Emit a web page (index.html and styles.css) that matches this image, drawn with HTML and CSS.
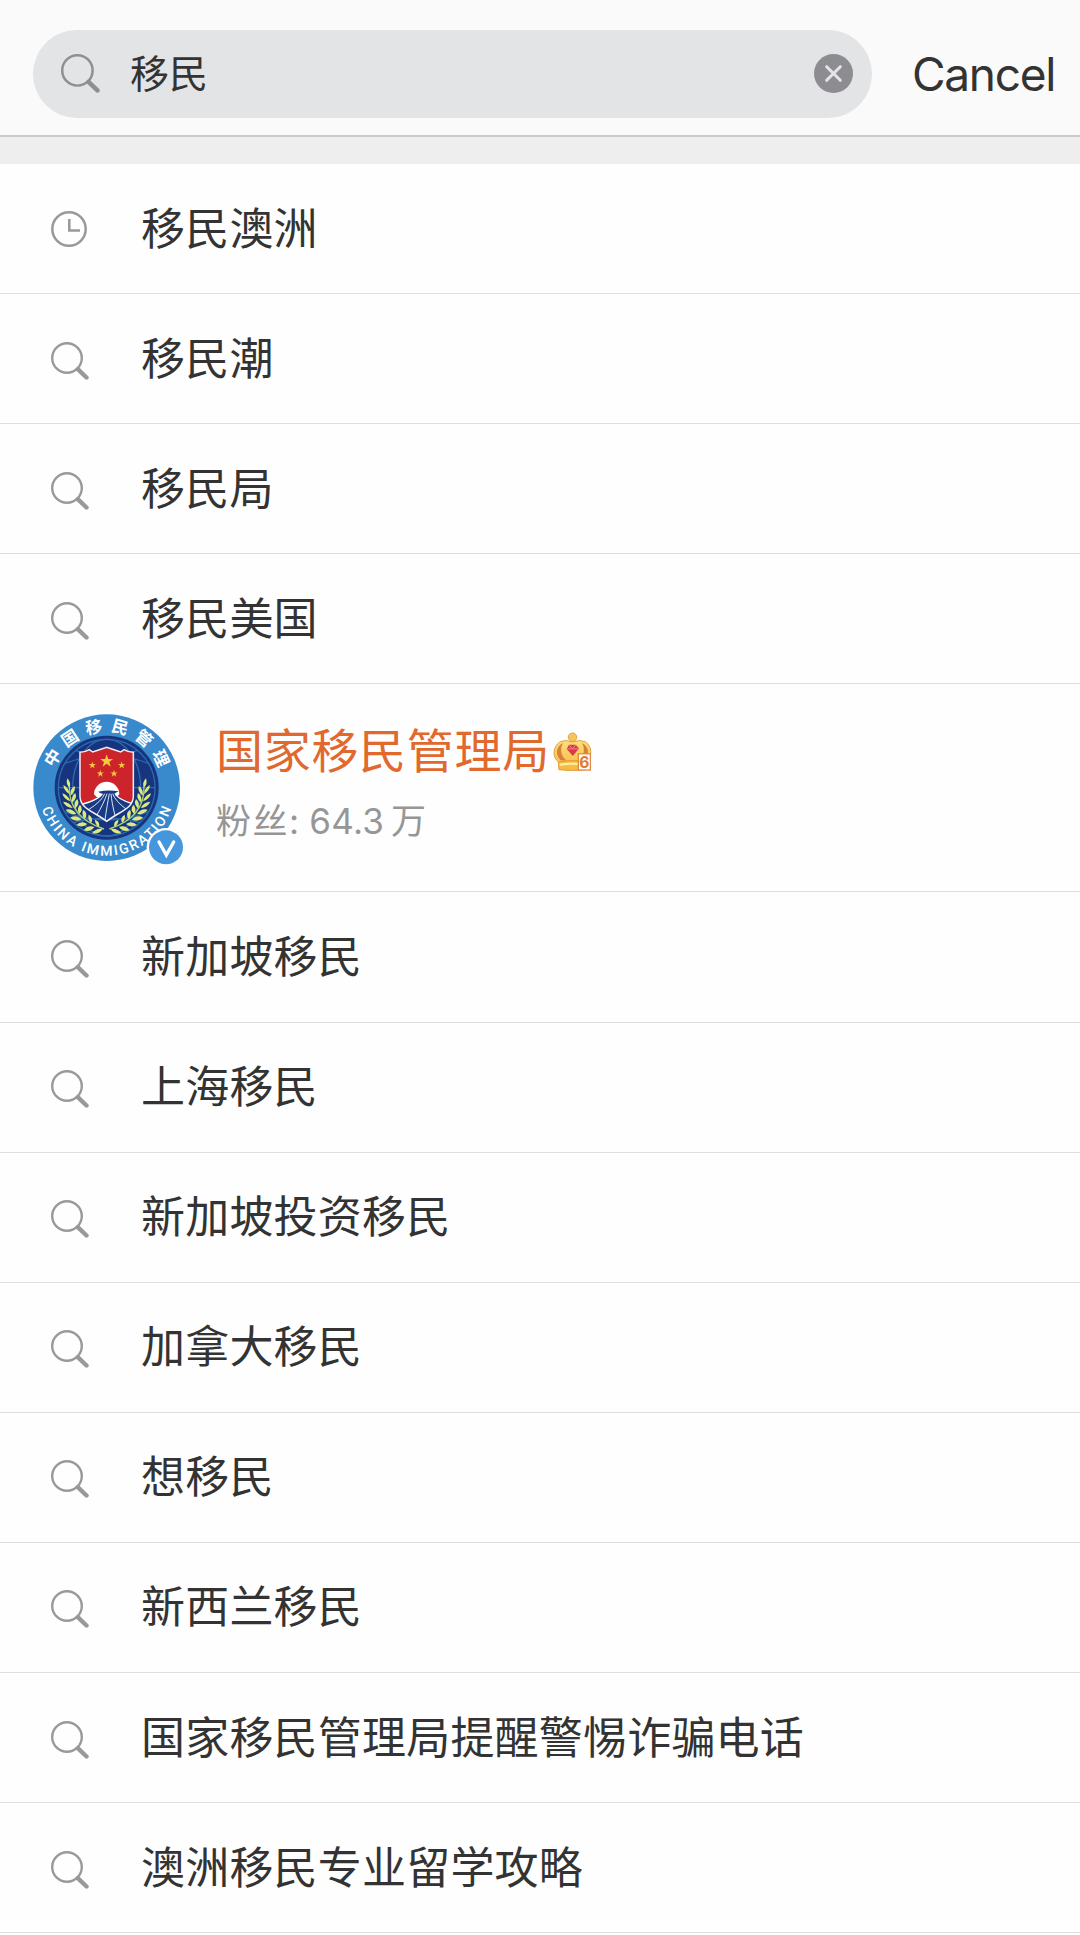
FILE: index.html
```html
<!DOCTYPE html>
<html lang="zh-CN">
<head>
  <meta charset="UTF-8">
  <meta name="viewport" content="width=device-width, initial-scale=1.0">
  <title>移民</title>
  <link rel="stylesheet" href="styles.css">
</head>
<body>

<!-- shared icon -->
<svg class="defs" width="0" height="0">
  <symbol id="search" viewBox="0 0 38 38">
    <circle cx="16" cy="16" r="14.8" fill="none" stroke="currentColor" stroke-width="2.4"/>
    <path d="M26.8 27.2L35.5 35.5" fill="none" stroke="currentColor" stroke-width="4.4" stroke-linecap="round"/>
  </symbol>
</svg>

<header class="header">
  <div class="search-box">
    <svg class="box-icon"><use href="#search"/></svg>
    <span class="query">移民</span>
    <svg class="clear" viewBox="0 0 39 39">
      <circle cx="19.5" cy="19.5" r="19.5" fill="#8d8c91"/>
      <path d="M12.7 12.7L26.3 26.3M26.3 12.7L12.7 26.3" stroke="#e5e5e8" stroke-width="3" stroke-linecap="round"/>
    </svg>
  </div>
  <span class="cancel">Cancel</span>
</header>

<ul class="list">
  <li class="row">
    <svg class="icon clock" viewBox="0 0 38 38">
      <circle cx="18" cy="19" r="16.7" fill="none" stroke="currentColor" stroke-width="2.5"/>
      <path d="M18.3 9V20.5H29" fill="none" stroke="currentColor" stroke-width="2.6"/>
    </svg>
    <span class="word">移民澳洲</span>
  </li>
  <li class="row"><svg class="icon"><use href="#search"/></svg><span class="word">移民潮</span></li>
  <li class="row"><svg class="icon"><use href="#search"/></svg><span class="word">移民局</span></li>
  <li class="row"><svg class="icon"><use href="#search"/></svg><span class="word">移民美国</span></li>

  <li class="row profile">
    <svg class="avatar" viewBox="39 41 453 453">
      <defs>
        <path id="arc-top" d="M93 262A167 167 0 0 1 427 262"/>
        <path id="arc-bottom" d="M56 262A204 204 0 0 0 464 262"/>
        <clipPath id="shield-clip"><path id="shield" d="M180 156Q194 156 208 148L218 155L236 149L260 141L284 149L302 155L312 148Q326 156 340 156V288C340 326 296 334 260 363C224 334 180 326 180 288Z"/></clipPath>
        <g id="laurel" fill="#dce97c">
          <path d="M148 258C146 318 178 362 252 386" fill="none" stroke="#a9cf70" stroke-width="4"/>
          <path d="M149 262Q136 252 142 234Q154 246 149 262Z"/>
          <path d="M148 281Q132 272 130 254Q148 264 148 281Z"/>
          <path d="M151 286Q150 265 164 257Q168 274 151 286Z"/>
          <path d="M151 303Q131 297 127 279Q146 286 151 303Z"/>
          <path d="M156 307Q153 288 166 278Q173 294 156 307Z"/>
          <path d="M158 323Q137 321 129 304Q149 305 158 323Z"/>
          <path d="M165 325Q160 306 172 296Q181 312 165 325Z"/>
          <path d="M169 341Q149 344 137 328Q157 323 169 341Z"/>
          <path d="M177 341Q169 324 180 313Q192 328 177 341Z"/>
          <path d="M184 358Q167 367 150 352Q170 341 184 358Z"/>
          <path d="M194 356Q183 342 190 328Q206 340 194 356Z"/>
          <path d="M202 371Q188 384 169 374Q184 359 202 371Z"/>
          <path d="M213 368Q202 356 206 343Q222 353 213 368Z"/>
          <path d="M223 380Q211 396 191 390Q204 373 223 380Z"/>
          <path d="M236 380Q224 370 225 358Q242 364 236 380Z"/>
          <path d="M248 386Q237 403 216 399Q229 382 248 386Z"/>
        </g>
      </defs>
      <circle cx="260" cy="262" r="220" fill="#398acd"/>
      <circle cx="260" cy="262" r="156" fill="#17357f"/>
      <g fill="none" stroke="#2b6bae" stroke-width="4">
        <circle cx="260" cy="262" r="145"/>
        <ellipse cx="260" cy="262" rx="102" ry="145"/>
        <path d="M115 262H405M133 190Q260 140 387 190M133 334Q260 384 387 334M167 150Q260 190 353 150M160 367Q260 340 360 367"/>
      </g>
      <use href="#laurel"/>
      <use href="#laurel" transform="translate(520 0) scale(-1 1)"/>
      <use href="#shield" fill="#cc242a"/>
      <g clip-path="url(#shield-clip)">
        <path d="M222 282A38 38 0 0 1 298 282L290 290H230Z" fill="#fff"/>
        <path d="M234 274Q264 268 296 273L285 279Q290 293 340 308V370H180V312Q238 298 246 281Z" fill="#193b86"/>
        <path d="M180 314Q238 298 247 280M285 279Q290 295 340 311" fill="none" stroke="#fff" stroke-width="4"/>
        <path d="M254 280Q246 302 206 328M261 280Q252 308 230 345M268 280Q262 310 254 365M273 280Q275 306 286 350M278 280Q286 302 318 326" fill="none" stroke="#fff" stroke-width="2.6"/>
      </g>
      <use href="#shield" fill="none" stroke="#f3ecf1" stroke-width="4.5"/>
      <g fill="#f6c83b">
        <path id="star" d="M260 162L264.500 176H279L268 185L272 199L260 190L248 199L252 185L241 176H255.500Z"/>
        <use href="#star" transform="translate(217 194) scale(.55) translate(-260 -181)"/>
        <use href="#star" transform="translate(305 194) scale(.55) translate(-260 -181)"/>
        <use href="#star" transform="translate(241 219) scale(.55) translate(-260 -181)"/>
        <use href="#star" transform="translate(282 219) scale(.55) translate(-260 -181)"/>
      </g>
      <text class="seal-cn"><textPath href="#arc-top" startOffset="58">中国移民管理</textPath></text>
      <text class="seal-en"><textPath href="#arc-bottom" startOffset="64" textLength="513">CHINA IMMIGRATION</textPath></text>
      <circle cx="438" cy="441" r="58" fill="#fff"/>
      <circle cx="438" cy="441" r="51" fill="#4596dc"/>
      <path d="M417 425L439 464L461 425" fill="none" stroke="#fff" stroke-width="10" stroke-linecap="round"/>
    </svg>
    <div class="info">
      <div class="name">
        <span>国家移民管理局</span>
        <svg class="crown" viewBox="0 0 120 120">
          <defs>
            <linearGradient id="gold" x1="0" y1="0" x2="0" y2="1">
              <stop offset="0" stop-color="#fce07a"/>
              <stop offset="1" stop-color="#f5b640"/>
            </linearGradient>
          </defs>
          <path d="M18 116L16 91C-2 79-2 46 22 30Q38 22 60 31Q82 22 100 30C122 46 120 75 104 91L102 116Q60 122 18 116Z" fill="url(#gold)" stroke="#e39d45" stroke-width="3"/>
          <path d="M23 87C5 67 11 42 31 34C18 54 28 80 42 88ZM97 87C115 67 109 42 89 34C102 54 92 80 78 88Z" fill="#d9803a"/>
          <path d="M17 93Q60 84 103 93" fill="none" stroke="#ea9f3f" stroke-width="4"/>
          <path d="M21 101Q60 94 99 101" fill="none" stroke="#fff0a0" stroke-width="6"/>
          <circle cx="60" cy="16" r="13" fill="#f8c657" stroke="#df9f50" stroke-width="3"/>
          <path d="M49 39H70L80 51L61 74L42 52Z" fill="#dc3a48"/>
          <path d="M49 40L60 52L70 40M43 52H78" fill="none" stroke="#f5828c" stroke-width="3"/>
          <rect x="78" y="67" width="37" height="50" fill="#fff" stroke="#e38b40" stroke-width="4"/>
          <text class="level" x="96.500" y="110">6</text>
        </svg>
      </div>
      <div class="fans">粉丝<span class="num">: 64.3</span>万</div>
    </div>
  </li>

  <li class="row"><svg class="icon"><use href="#search"/></svg><span class="word">新加坡移民</span></li>
  <li class="row"><svg class="icon"><use href="#search"/></svg><span class="word">上海移民</span></li>
  <li class="row"><svg class="icon"><use href="#search"/></svg><span class="word">新加坡投资移民</span></li>
  <li class="row"><svg class="icon"><use href="#search"/></svg><span class="word">加拿大移民</span></li>
  <li class="row"><svg class="icon"><use href="#search"/></svg><span class="word">想移民</span></li>
  <li class="row"><svg class="icon"><use href="#search"/></svg><span class="word">新西兰移民</span></li>
  <li class="row"><svg class="icon"><use href="#search"/></svg><span class="word">国家移民管理局提醒警惕诈骗电话</span></li>
  <li class="row"><svg class="icon"><use href="#search"/></svg><span class="word">澳洲移民专业留学攻略</span></li>
</ul>

</body>
</html>
```
FILE: styles.css
```css
* {
  box-sizing: border-box;
}
body {
  margin: 0;
  height: 1935px;
  overflow: hidden;
  background: #fefefe;
  color: #333;
  font-family: "Noto Sans CJK SC", sans-serif;
}
.defs {
  position: absolute;
}
.header {
  display: flex;
  align-items: center;
  height: 137px;
  padding: 12px 0 0 33px;
  background: #fafafa;
  border-bottom: 2px solid #cacaca;
}
.search-box {
  display: flex;
  align-items: center;
  width: 839px;
  height: 88px;
  padding: 0 19px 0 28px;
  border-radius: 44px;
  background: #e3e4e6;
}
.box-icon {
  width: 39px;
  height: 39px;
  color: #8e8f91;
}
.query {
  flex: 1;
  margin-left: 30px;
  padding-bottom: 5px;
  font-size: 39px;
  line-height: 60px;
}
.clear {
  width: 39px;
  height: 39px;
}
.cancel {
  margin-left: 40px;
  padding-top: 1px;
  font-family: Inter, sans-serif;
  font-size: 46px;
  letter-spacing: -1.3px;
  line-height: 60px;
}
.list {
  margin: 0;
  padding: 0;
  list-style: none;
  border-top: 27px solid #eee;
}
.row {
  display: flex;
  align-items: center;
  height: 130.1px;
  padding-left: 51px;
  border-bottom: 1px solid #dedede;
  font-size: 44px;
  letter-spacing: 0.2px;
  line-height: 64px;
  white-space: nowrap;
}
.word {
  padding-bottom: 6px;
}
.icon {
  width: 38px;
  height: 38px;
  margin: 4px 52px 0 0;
  color: #999;
}
.clock {
  margin-top: 0;
}
.profile {
  height: 208.1px;
  padding-left: 33px;
  align-items: flex-start;
}
.avatar {
  width: 151px;
  height: 151px;
  margin-top: 30px;
}
.seal-cn {
  fill: #fff;
  font-size: 50px;
  font-weight: bold;
  letter-spacing: 21.6px;
}
.seal-en {
  fill: #fff;
  font-family: Roboto, sans-serif;
  font-size: 42px;
  font-weight: 500;
}
.info {
  margin: 31px 0 0 32px;
}
.name {
  display: flex;
  align-items: center;
  color: #e1692d;
  font-size: 47px;
  letter-spacing: 0.7px;
  line-height: 66px;
}
.crown {
  width: 39px;
  height: 39px;
  margin: 6px 0 0 3px;
}
.level {
  fill: #e17b2f;
  font-family: Inter, sans-serif;
  font-size: 48px;
  font-weight: bold;
  letter-spacing: 0;
  text-anchor: middle;
}
.fans {
  margin-top: 10px;
  color: #969696;
  font-size: 35px;
  letter-spacing: 1.5px;
  line-height: 56px;
}
.num {
  margin-right: 7px;
  font-family: Inter, sans-serif;
  letter-spacing: 0.2px;
}
```
